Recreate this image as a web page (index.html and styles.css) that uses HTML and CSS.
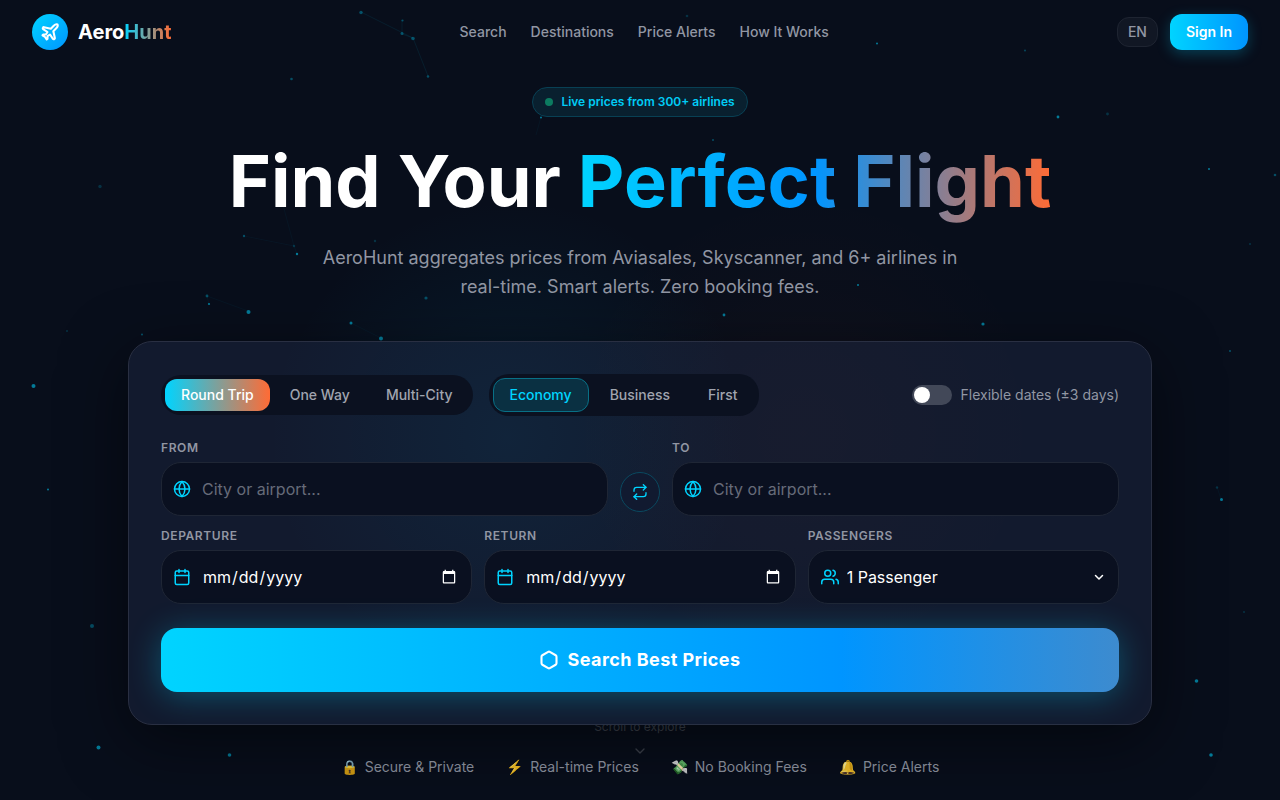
FILE: index.html
```html
<!DOCTYPE html>
<html lang="en">
<head>
<meta charset="utf-8">
<meta name="viewport" content="width=device-width, initial-scale=1">
<title>AeroHunt</title>
<link rel="stylesheet" href="styles.css">
</head>
<body>
<div class="page">
  <svg class="particles" viewBox="0 0 1280 800" preserveAspectRatio="xMidYMin slice" aria-hidden="true">
    <g stroke="#00d4ff" stroke-opacity=".08" fill="none">
      <path d="M361 12 413 38M402 20l0 14 11 4M413 38l15 38"/>
      <path stroke-opacity=".04" d="M244 236l50 10 3 8M283 205l11 41M207 296l2 8M351 323l30 15M536 135l5-18M1217 487l4 12M207 296l41 15"/>
    </g>
    <g fill="#00d4ff">
      <g opacity=".55">
        <circle cx="381" cy="338.500" r="2"/><circle cx="248.500" cy="312" r="2"/><circle cx="351" cy="323" r="1.5"/>
        <circle cx="33.500" cy="386" r="2"/><circle cx="98.500" cy="747.500" r="2"/><circle cx="229.500" cy="755" r="1.8"/>
        <circle cx="983" cy="324" r="1.6"/><circle cx="1058" cy="117" r="1.4"/><circle cx="724" cy="315" r="1.4"/>
        <circle cx="1196.500" cy="681" r="1.8"/><circle cx="1211" cy="755" r="1.8"/><circle cx="1221.500" cy="499.500" r="1.5"/>
        <circle cx="48" cy="489.500" r="1"/><circle cx="209" cy="304" r="1.1"/><circle cx="297" cy="254" r="1.2"/>
        <circle cx="1209" cy="169" r="1"/><circle cx="877" cy="43.500" r="1"/><circle cx="858" cy="285" r="1"/>
        <circle cx="541" cy="117.500" r="1"/>
      </g>
      <g opacity=".32">
        <circle cx="361" cy="12.500" r="1.7"/><circle cx="402" cy="33.500" r="1.5"/><circle cx="413" cy="38.500" r="1.8"/>
        <circle cx="402.500" cy="20.500" r="1.1"/><circle cx="428" cy="76.500" r="1.2"/><circle cx="291.500" cy="79" r="1.3"/>
        <circle cx="92" cy="626" r="2"/><circle cx="244" cy="236" r="1.2"/><circle cx="207" cy="296" r="1.4"/>
        <circle cx="1275" cy="175" r="1.3"/><circle cx="1230" cy="351" r="1.1"/><circle cx="142" cy="334.500" r="1.1"/>
        <circle cx="426" cy="298" r="1.6"/><circle cx="713" cy="140" r="1"/><circle cx="1025" cy="50.500" r=".9"/>
      </g>
      <g opacity=".18">
        <circle cx="100" cy="186.500" r="1.7"/><circle cx="294" cy="246" r="1.2"/><circle cx="375" cy="241" r="1.2"/>
        <circle cx="1107.500" cy="114" r="1.4"/><circle cx="687" cy="16" r="1.3"/><circle cx="1250" cy="244" r="1"/>
        <circle cx="1217" cy="487.500" r="1.2"/><circle cx="1244" cy="612" r="1"/><circle cx="67" cy="331" r="1"/>
      </g>
    </g>
  </svg>

  <header class="topbar">
    <a class="brand" href="#">
      <span class="brand-mark">
        <svg viewBox="0 0 24 24" class="icon icon-plane" aria-hidden="true"><path d="M17.8 19.2 16 11l3.5-3.5C21 6 21.500 4 21 3c-1-.5-3 0-4.500 1.500L13 8 4.800 6.200c-.5-.1-.9.1-1.100.5l-.3.5c-.2.5-.1 1 .3 1.300L9 12l-2 3H4l-1 1 3 2 2 3 1-1v-3l3-2 3.500 5.300c.3.4.8.5 1.300.3l.5-.2c.4-.3.6-.7.5-1.200z"/></svg>
      </span>
      <span class="brand-name">Aero<span class="brand-accent">Hunt</span></span>
    </a>
    <nav class="nav">
      <a href="#search">Search</a>
      <a href="#destinations">Destinations</a>
      <a href="#alerts">Price Alerts</a>
      <a href="#how">How It Works</a>
    </nav>
    <div class="actions">
      <button type="button" class="lang">EN</button>
      <button type="button" class="signin">Sign In</button>
    </div>
  </header>

  <main class="hero">
    <div class="badge"><span class="badge-dot"></span>Live prices from 300+ airlines</div>
    <h1 class="title">Find Your <span class="title-accent">Perfect Flight</span></h1>
    <p class="lead">AeroHunt aggregates prices from Aviasales, Skyscanner, and 6+ airlines in real-time. Smart alerts. Zero booking fees.</p>

    <form class="card" id="search">
      <div class="options">
        <div class="segment segment-trip">
          <button type="button" class="active">Round Trip</button>
          <button type="button">One Way</button>
          <button type="button">Multi-City</button>
        </div>
        <div class="segment segment-cabin">
          <button type="button" class="active">Economy</button>
          <button type="button">Business</button>
          <button type="button">First</button>
        </div>
        <label class="flex-dates"><input type="checkbox" class="switch">Flexible dates (±3 days)</label>
      </div>

      <div class="fields">
        <div class="route">
          <div class="field">
            <label for="from">From</label>
            <div class="control">
              <svg viewBox="0 0 24 24" class="icon" aria-hidden="true"><circle cx="12" cy="12" r="10"/><path d="M2 12h20M12 2a15.300 15.300 0 0 1 4 10 15.300 15.300 0 0 1-4 10 15.300 15.300 0 0 1-4-10 15.300 15.300 0 0 1 4-10z"/></svg>
              <input id="from" type="text" placeholder="City or airport...">
            </div>
          </div>
          <button type="button" class="swap" aria-label="Swap cities">
            <svg viewBox="0 0 24 24" class="icon icon-swap" aria-hidden="true"><path d="m17 1 4 4-4 4"/><path d="M3 11V9a4 4 0 0 1 4-4h14M7 23l-4-4 4-4"/><path d="M21 13v2a4 4 0 0 1-4 4H3"/></svg>
          </button>
          <div class="field">
            <label for="to">To</label>
            <div class="control">
              <svg viewBox="0 0 24 24" class="icon" aria-hidden="true"><circle cx="12" cy="12" r="10"/><path d="M2 12h20M12 2a15.300 15.300 0 0 1 4 10 15.300 15.300 0 0 1-4 10 15.300 15.300 0 0 1-4-10 15.300 15.300 0 0 1 4-10z"/></svg>
              <input id="to" type="text" placeholder="City or airport...">
            </div>
          </div>
        </div>
        <div class="details">
          <div class="field">
            <label for="departure">Departure</label>
            <div class="control">
              <svg viewBox="0 0 24 24" class="icon" aria-hidden="true"><rect x="3" y="4" width="18" height="18" rx="2"/><path d="M16 2v4M8 2v4M3 10h18"/></svg>
              <input id="departure" type="date">
            </div>
          </div>
          <div class="field">
            <label for="return">Return</label>
            <div class="control">
              <svg viewBox="0 0 24 24" class="icon" aria-hidden="true"><rect x="3" y="4" width="18" height="18" rx="2"/><path d="M16 2v4M8 2v4M3 10h18"/></svg>
              <input id="return" type="date">
            </div>
          </div>
          <div class="field">
            <label for="passengers">Passengers</label>
            <div class="control control-select">
              <svg viewBox="0 0 24 24" class="icon" aria-hidden="true"><path d="M17 21v-2a4 4 0 0 0-4-4H5a4 4 0 0 0-4 4v2"/><circle cx="9" cy="7" r="4"/><path d="M23 21v-2a4 4 0 0 0-3-3.870M16 3.130a4 4 0 0 1 0 7.750"/></svg>
              <select id="passengers"><option>1 Passenger</option><option>2 Passengers</option><option>3 Passengers</option></select>
              <svg viewBox="0 0 14 14" class="icon icon-arrow" aria-hidden="true"><path d="m3.500 5.500 3.500 3.500 3.500-3.500"/></svg>
            </div>
          </div>
        </div>
      </div>

      <button type="submit" class="submit">
        <svg viewBox="0 0 24 24" class="icon icon-submit" aria-hidden="true"><path d="M21 16V8a2 2 0 0 0-1-1.730l-7-4a2 2 0 0 0-2 0l-7 4A2 2 0 0 0 3 8v8a2 2 0 0 0 1 1.730l7 4a2 2 0 0 0 2 0l7-4A2 2 0 0 0 21 16z"/></svg>
        Search Best Prices
      </button>
    </form>

    <ul class="perks">
      <li><span>🔒</span>Secure &amp; Private</li>
      <li><span>⚡</span>Real-time Prices</li>
      <li><span>💸</span>No Booking Fees</li>
      <li><span>🔔</span>Price Alerts</li>
    </ul>
  </main>

  <div class="scroll-hint">
    Scroll to explore
    <svg viewBox="0 0 24 24" class="icon icon-chevron" aria-hidden="true"><path d="m6 9 6 6 6-6"/></svg>
  </div>
</div>
</body>
</html>
```
FILE: styles.css
```css
:root {
  color-scheme: dark;
  --cyan: #00d4ff;
  --blue: #0095ff;
  --orange: #ff6b35;
  --muted: #9196a3;
}

* { box-sizing: border-box; }

body {
  margin: 0;
  background: #080e1b;
  color: #fff;
  font-family: Inter, "Liberation Sans", sans-serif;
  font-size: 14px;
  line-height: 20px;
}

button, input, select { font: inherit; color: inherit; }
button { cursor: pointer; }
a { color: inherit; text-decoration: none; }

.page {
  position: relative;
  min-height: 100vh;
  overflow: hidden;
  background:
    radial-gradient(circle 240px at 40% 55%, rgba(0, 149, 200, .11), transparent),
    radial-gradient(circle 240px at 63% 54%, rgba(255, 107, 53, .035), transparent);
}

.particles {
  position: absolute;
  inset: 0;
  width: 100%;
  height: 100%;
}

.icon {
  width: 18px;
  height: 18px;
  fill: none;
  stroke: currentColor;
  stroke-width: 2;
  stroke-linecap: round;
  stroke-linejoin: round;
}

.topbar {
  position: relative;
  display: flex;
  align-items: center;
  justify-content: space-between;
  height: 64px;
  padding: 0 32px;
}

.brand {
  display: flex;
  align-items: center;
  gap: 10px;
}

.brand-mark {
  display: grid;
  place-items: center;
  width: 36px;
  height: 36px;
  border-radius: 50%;
  background: linear-gradient(135deg, var(--cyan), var(--blue));
}

.icon-plane {
  width: 20px;
  height: 20px;
  stroke-width: 2.5;
}

.brand-name {
  font-size: 20px;
  font-weight: 700;
  line-height: 28px;
}

.brand-accent {
  background: linear-gradient(90deg, var(--cyan), var(--orange));
  background-clip: text;
  -webkit-background-clip: text;
  color: transparent;
}

.nav {
  display: flex;
  gap: 24px;
  color: var(--muted);
  font-weight: 500;
}

.actions {
  display: flex;
  align-items: center;
  gap: 12px;
}

.lang {
  height: 30px;
  padding: 0 10px;
  border: 1px solid #1e2431;
  border-radius: 12px;
  background: #111724;
  color: var(--muted);
  font-weight: 500;
}

.signin {
  height: 36px;
  padding: 0 16px;
  border: 0;
  border-radius: 12px;
  background: linear-gradient(90deg, var(--cyan), var(--blue));
  box-shadow: 0 4px 14px rgba(0, 212, 255, .25);
  font-weight: 600;
}

.hero {
  position: relative;
  z-index: 1;
  display: flex;
  flex-direction: column;
  align-items: center;
  max-width: 1072px;
  margin: 0 auto;
  padding: 23px 24px;
}

.badge {
  display: flex;
  align-items: center;
  gap: 8px;
  height: 30px;
  padding: 0 12px;
  border: 1px solid #084054;
  border-radius: 15px;
  background: #09202f;
  color: #00ccf6;
  font-size: 12px;
  font-weight: 600;
}

.badge-dot {
  width: 8px;
  height: 8px;
  border-radius: 50%;
  background: #0c7b60;
}

.title {
  margin: 24px 0 23px;
  font-size: 72px;
  font-weight: 700;
  line-height: 79px;
  text-align: center;
}

.title-accent {
  background: linear-gradient(90deg, var(--cyan), var(--blue) 50%, var(--orange));
  background-clip: text;
  -webkit-background-clip: text;
  color: transparent;
}

.lead {
  max-width: 672px;
  margin: 0 0 40px;
  color: var(--muted);
  font-size: 18px;
  line-height: 29px;
  text-align: center;
}

.card {
  display: grid;
  gap: 24px;
  width: 100%;
  padding: 32px;
  border: 1px solid #292f42;
  border-radius: 24px;
  background:
    radial-gradient(circle 240px at 37% 25%, rgba(0, 149, 200, .08), transparent),
    radial-gradient(circle 240px at 66% 24%, rgba(255, 107, 53, .025), transparent),
    #121a2e;
  box-shadow: 0 16px 64px rgba(0, 0, 0, .5);
}

.options {
  display: flex;
  align-items: center;
  flex-wrap: wrap;
  gap: 16px;
}

.segment {
  display: flex;
  gap: 4px;
  padding: 4px;
  border-radius: 20px;
  background: #0b1120;
}

.segment button {
  padding: 6px 16px;
  border: 0;
  border-radius: 12px;
  background: none;
  color: #a0a4af;
  font-weight: 500;
}

.segment-trip .active {
  background: linear-gradient(90deg, var(--cyan), var(--orange));
  color: #fff;
}

.segment-cabin button { border: 1px solid transparent; }

.segment-cabin .active {
  border-color: #087086;
  background: #0a3042;
  color: var(--cyan);
}

.flex-dates {
  display: flex;
  align-items: center;
  gap: 8px;
  margin-left: auto;
  color: var(--muted);
}

.switch {
  appearance: none;
  width: 40px;
  height: 20px;
  margin: 0;
  padding: 2px;
  border-radius: 10px;
  background: #424858;
}

.switch::before {
  content: "";
  display: block;
  width: 16px;
  height: 16px;
  border-radius: 50%;
  background: #fff;
}

.switch:checked { background: var(--cyan); }
.switch:checked::before { margin-left: auto; }

.fields {
  display: grid;
  gap: 12px;
}

.route {
  display: grid;
  grid-template-columns: 1fr 40px 1fr;
  align-items: end;
  gap: 12px;
}

.details {
  display: grid;
  grid-template-columns: repeat(3, 1fr);
  gap: 12px;
}

.field {
  display: grid;
  gap: 6px;
}

.field label {
  color: var(--muted);
  font-size: 12px;
  font-weight: 600;
  line-height: 16px;
  letter-spacing: .6px;
  text-transform: uppercase;
}

.control {
  display: flex;
  align-items: center;
  height: 54px;
  padding: 0 12px 0 11px;
  border: 1px solid #1f2635;
  border-radius: 20px;
  background: #0a1020;
  color: var(--cyan);
}

.control .icon { flex: none; }

.control input,
.control select {
  flex: 1;
  min-width: 0;
  height: 52px;
  padding: 0 0 0 11px;
  border: 0;
  outline: 0;
  background: transparent;
  color: #fff;
  font-size: 16px;
}

.control-select { padding-left: 12px; }

.control select {
  appearance: none;
  margin-right: -14px;
  padding: 0 14px 0 8px;
}

.control .icon-arrow {
  width: 14px;
  height: 14px;
  color: #fff;
  stroke-width: 1.5;
  pointer-events: none;
}

.control option { background: #0a1020; }
.control ::placeholder { color: #666b79; }

.swap {
  display: grid;
  place-items: center;
  width: 40px;
  height: 40px;
  margin-bottom: 4px;
  padding: 0;
  border: 1px solid #0a4960;
  border-radius: 50%;
  background: #111a30;
  color: var(--cyan);
}

.icon-swap {
  width: 16px;
  height: 16px;
}

.submit {
  display: flex;
  align-items: center;
  justify-content: center;
  gap: 8px;
  height: 64px;
  border: 0;
  border-radius: 16px;
  background: linear-gradient(90deg, var(--cyan), var(--blue) 71%, #3d8bcf);
  box-shadow: 0 4px 32px rgba(0, 212, 255, .3);
  font-size: 18px;
  font-weight: 700;
  letter-spacing: .45px;
}

.icon-submit {
  width: 20px;
  height: 20px;
  stroke-width: 2.5;
}

.perks {
  display: flex;
  justify-content: center;
  flex-wrap: wrap;
  gap: 32px;
  margin: 32px 0 0;
  padding: 0;
  color: #7f8490;
  list-style: none;
}

.perks li {
  display: flex;
  gap: 7px;
}

.perks span { opacity: .85; }

.scroll-hint {
  position: absolute;
  left: 0;
  right: 0;
  bottom: 41px;
  z-index: 0;
  display: flex;
  flex-direction: column;
  align-items: center;
  gap: 8px;
  color: #3c414c;
  font-size: 12px;
  line-height: 16px;
}

.icon-chevron {
  width: 16px;
  height: 16px;
}
```
